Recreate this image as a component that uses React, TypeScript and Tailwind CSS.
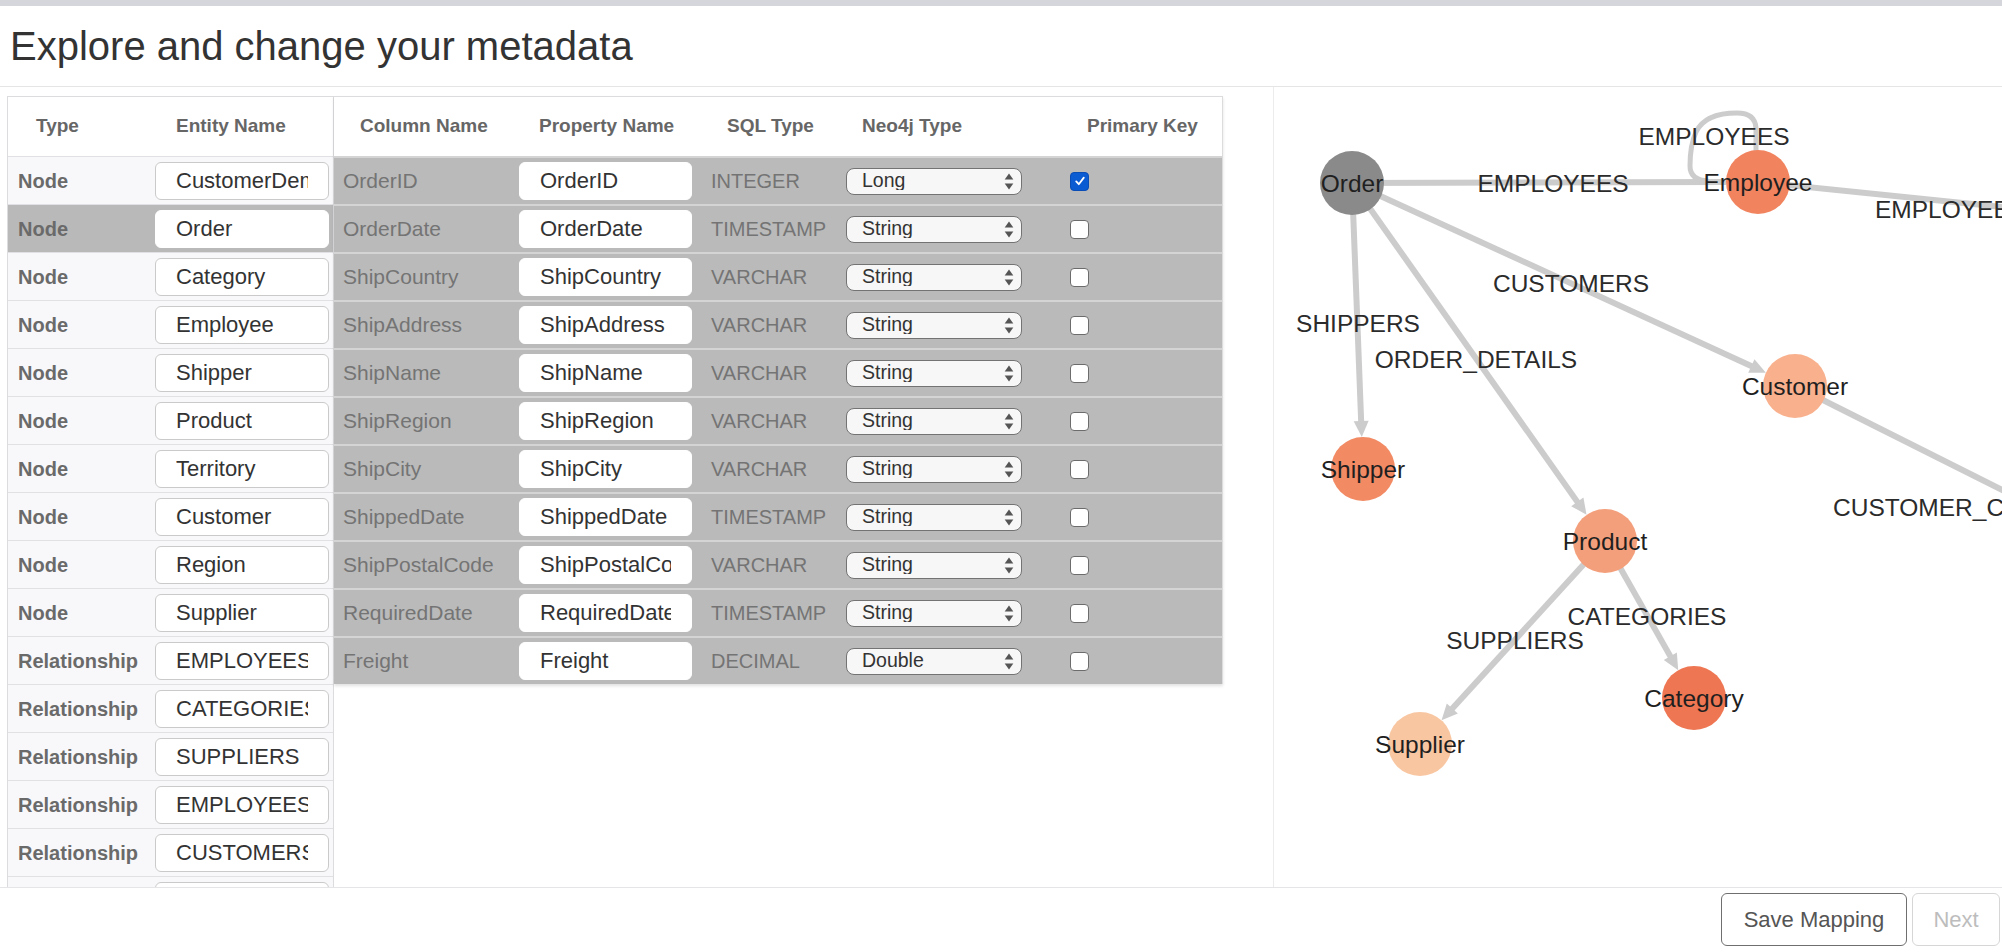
import React from 'react';

// Types
interface EntityRow {
  type: 'Node' | 'Relationship';
  name: string;
  selected?: boolean;
}

interface ColumnRow {
  column: string;
  property: string;
  sqlType: string;
  neoType: string;
  pk?: boolean;
}

interface GraphNode {
  id: string;
  x: number;
  y: number;
  color: string;
}

const entities: EntityRow[] = [
  { type: 'Node', name: 'CustomerDemographics' },
  { type: 'Node', name: 'Order', selected: true },
  { type: 'Node', name: 'Category' },
  { type: 'Node', name: 'Employee' },
  { type: 'Node', name: 'Shipper' },
  { type: 'Node', name: 'Product' },
  { type: 'Node', name: 'Territory' },
  { type: 'Node', name: 'Customer' },
  { type: 'Node', name: 'Region' },
  { type: 'Node', name: 'Supplier' },
  { type: 'Relationship', name: 'EMPLOYEES' },
  { type: 'Relationship', name: 'CATEGORIES' },
  { type: 'Relationship', name: 'SUPPLIERS' },
  { type: 'Relationship', name: 'EMPLOYEES' },
  { type: 'Relationship', name: 'CUSTOMERS' },
  { type: 'Relationship', name: 'SHIPPERS' },
  { type: 'Relationship', name: 'ORDER_DETAILS' },
];

const columns: ColumnRow[] = [
  { column: 'OrderID', property: 'OrderID', sqlType: 'INTEGER', neoType: 'Long', pk: true },
  { column: 'OrderDate', property: 'OrderDate', sqlType: 'TIMESTAMP', neoType: 'String' },
  { column: 'ShipCountry', property: 'ShipCountry', sqlType: 'VARCHAR', neoType: 'String' },
  { column: 'ShipAddress', property: 'ShipAddress', sqlType: 'VARCHAR', neoType: 'String' },
  { column: 'ShipName', property: 'ShipName', sqlType: 'VARCHAR', neoType: 'String' },
  { column: 'ShipRegion', property: 'ShipRegion', sqlType: 'VARCHAR', neoType: 'String' },
  { column: 'ShipCity', property: 'ShipCity', sqlType: 'VARCHAR', neoType: 'String' },
  { column: 'ShippedDate', property: 'ShippedDate', sqlType: 'TIMESTAMP', neoType: 'String' },
  { column: 'ShipPostalCode', property: 'ShipPostalCode', sqlType: 'VARCHAR', neoType: 'String' },
  { column: 'RequiredDate', property: 'RequiredDate', sqlType: 'TIMESTAMP', neoType: 'String' },
  { column: 'Freight', property: 'Freight', sqlType: 'DECIMAL', neoType: 'Double' },
];

// graph coordinates are page coordinates (see viewBox)
const nodes: Record<string, GraphNode> = {
  Order: { id: 'Order', x: 1352, y: 183, color: '#8a8a8a' },
  Employee: { id: 'Employee', x: 1758, y: 182, color: '#f1845f' },
  Customer: { id: 'Customer', x: 1795, y: 386, color: '#f8b08d' },
  Shipper: { id: 'Shipper', x: 1363, y: 469, color: '#f28a64' },
  Product: { id: 'Product', x: 1605, y: 541, color: '#f49f7b' },
  Category: { id: 'Category', x: 1694, y: 698, color: '#ee7652' },
  Supplier: { id: 'Supplier', x: 1420, y: 744, color: '#f9c6a2' },
};

const R = 32;
const EDGE = '#cccccc';

// Edge with optional arrow head ending on target circle
const Edge: React.FC<{ x1: number; y1: number; x2: number; y2: number; head?: boolean; r?: number }> = ({
  x1, y1, x2, y2, head = true, r = R,
}) => {
  const dx = x2 - x1;
  const dy = y2 - y1;
  const len = Math.hypot(dx, dy);
  const ux = dx / len;
  const uy = dy / len;
  const tipX = x2 - ux * r;
  const tipY = y2 - uy * r;
  const bx = tipX - ux * 16;
  const by = tipY - uy * 16;
  const px = -uy * 7.5;
  const py = ux * 7.5;
  return (
    <g>
      <line x1={x1} y1={y1} x2={head ? bx + ux : tipX} y2={head ? by + uy : tipY} stroke={EDGE} strokeWidth={6} />
      {head && (
        <polygon points={`${tipX},${tipY} ${bx + px},${by + py} ${bx - px},${by - py}`} fill={EDGE} />
      )}
    </g>
  );
};

const Graph: React.FC = () => {
  const n = nodes;
  const labels: { text: string; x: number; y: number; anchor?: 'start' | 'middle' }[] = [
    { text: 'EMPLOYEES', x: 1553, y: 183 },
    { text: 'EMPLOYEES', x: 1714, y: 136 },
    { text: 'EMPLOYEES', x: 1875, y: 209, anchor: 'start' },
    { text: 'CUSTOMERS', x: 1571, y: 283 },
    { text: 'SHIPPERS', x: 1358, y: 323 },
    { text: 'ORDER_DETAILS', x: 1476, y: 359 },
    { text: 'CUSTOMER_CUSTOMER_DEMO', x: 1833, y: 507, anchor: 'start' },
    { text: 'CATEGORIES', x: 1647, y: 616 },
    { text: 'SUPPLIERS', x: 1515, y: 640 },
  ];

  return (
    <svg width="728" height="800" viewBox="1274 87 728 800" className="block">
      {/* edges */}
      <Edge x1={n.Order.x} y1={n.Order.y} x2={n.Employee.x} y2={n.Employee.y} head={false} />
      <path
        d="M1756 152 L1756 128 Q1755 113 1737 113 Q1705 113 1696 132 Q1690 145 1690 166 Q1690 180 1708 181"
        fill="none"
        stroke={EDGE}
        strokeWidth={5}
      />
      <Edge x1={n.Employee.x} y1={n.Employee.y} x2={2100} y2={217} head={false} r={0} />
      <Edge x1={n.Order.x} y1={n.Order.y} x2={n.Customer.x} y2={n.Customer.y} />
      <Edge x1={n.Order.x} y1={n.Order.y} x2={n.Shipper.x} y2={n.Shipper.y} />
      <Edge x1={n.Order.x} y1={n.Order.y} x2={n.Product.x} y2={n.Product.y} />
      <Edge x1={n.Customer.x} y1={n.Customer.y} x2={2100} y2={539} head={false} r={0} />
      <Edge x1={n.Product.x} y1={n.Product.y} x2={n.Supplier.x} y2={n.Supplier.y} />
      <Edge x1={n.Product.x} y1={n.Product.y} x2={n.Category.x} y2={n.Category.y} />

      {/* nodes */}
      {Object.values(n).map(node => (
        <circle key={node.id} cx={node.x} cy={node.y} r={R} fill={node.color} />
      ))}

      {/* edge labels */}
      {labels.map((l, i) => (
        <text
          key={i}
          x={l.x}
          y={l.y}
          textAnchor={l.anchor || 'middle'}
          dominantBaseline="central"
          fontFamily="'Liberation Sans', Arial, sans-serif"
          fontSize={24.5}
          fill="#2b2b2b"
        >
          {l.text}
        </text>
      ))}

      {/* node labels */}
      {Object.values(n).map(node => (
        <text
          key={node.id + '-label'}
          x={node.x}
          y={node.y}
          textAnchor="middle"
          dominantBaseline="central"
          fontFamily="'Liberation Sans', Arial, sans-serif"
          fontSize={24.5}
          fill="#1f1f1f"
        >
          {node.id}
        </text>
      ))}
    </svg>
  );
};

const Checkbox: React.FC<{ checked?: boolean }> = ({ checked }) => (
  <div
    className={`w-[19px] h-[19px] rounded-[4px] border flex items-center justify-center ${
      checked ? 'bg-[#0b5bd3] border-[#0a4db5]' : 'bg-white border-[#6c6c6c]'
    }`}
  >
    {checked && (
      <svg width="12" height="12" viewBox="0 0 12 12">
        <path d="M2.2 6.4 L4.8 9.2 L9.8 2.6" fill="none" stroke="white" strokeWidth="1.8" strokeLinecap="round" strokeLinejoin="round" />
      </svg>
    )}
  </div>
);

const TypeSelect: React.FC<{ value: string }> = ({ value }) => (
  <div className="relative w-[176px] h-[27px]">
    <select
      value={value}
      onChange={() => {}}
      className="appearance-none w-full h-full rounded-[8px] border border-[#737373] bg-[#f7f7f7] pl-[15px] pt-0 pb-[1px] text-[19.5px] leading-none text-[#333] outline-none"
    >
      <option>String</option>
      <option>Long</option>
      <option>Double</option>
      <option>Boolean</option>
    </select>
    <svg className="pointer-events-none absolute right-[8px] top-[5px]" width="10" height="17" viewBox="0 0 10 17">
      <path d="M5 0.5 L9.3 6.5 H0.7 Z" fill="#555" />
      <path d="M5 16.5 L9.3 10.5 H0.7 Z" fill="#555" />
    </svg>
  </div>
);

export default function App() {
  return (
    <div className="w-[2002px] h-[952px] overflow-hidden bg-white font-['Liberation_Sans',Arial,sans-serif]">
      {/* top strip */}
      <div className="h-[6px] bg-[#d5d6dc]" />

      {/* Title */}
      <div className="h-[81px] border-b border-[#e5e5e8] flex items-center pl-[10px]">
        <h1 className="text-[40px] text-[#333] font-normal">Explore and change your metadata</h1>
      </div>

      {/* Main */}
      <div className="h-[800px] flex overflow-hidden">
        {/* Tables */}
        <div className="w-[1274px] shrink-0 border-r border-[#ececef] pl-[7px] pt-[9px] overflow-hidden">
          <div className="flex items-start">
            {/* Entities */}
            <div className="w-[327px] shrink-0 border-l border-t border-r border-[#dcdcdf]">
              <div className="grid grid-cols-[138px_1fr] h-[59px] items-center bg-white text-[19px] font-bold text-[#666]">
                <div className="pl-[28px]">Type</div>
                <div className="pl-[30px]">Entity Name</div>
              </div>
              {entities.map((e, i) => (
                <div
                  key={i}
                  className={`grid grid-cols-[138px_1fr] h-[48px] items-center border-t border-[#e1e1e5] ${
                    e.selected ? 'bg-[#b9b9b9]' : 'bg-[#f8f8fa]'
                  }`}
                >
                  <div className="pl-[10px] text-[20px] font-bold text-[#6a6a6a]">{e.type}</div>
                  <div className="pl-[9px]">
                    <input
                      readOnly
                      value={e.name}
                      className={`w-[174px] h-[38px] rounded-[6px] bg-white px-[20px] text-[22px] text-[#333] outline-none border ${
                        e.selected ? 'border-white' : 'border-[#cacaca]'
                      }`}
                    />
                  </div>
                </div>
              ))}
            </div>

            {/* Columns of selected entity */}
            <div className="w-[889px] shrink-0 border-t border-r border-[#dcdcdf] shadow-[0_2px_3px_rgba(0,0,0,0.12)]">
              <div className="grid grid-cols-[176px_192px_135px_224px_1fr] h-[59px] items-center bg-white text-[19px] font-bold text-[#666]">
                <div className="pl-[26px]">Column Name</div>
                <div className="pl-[29px]">Property Name</div>
                <div className="pl-[25px]">SQL Type</div>
                <div className="pl-[25px]">Neo4j Type</div>
                <div className="pl-[26px]">Primary Key</div>
              </div>
              {columns.map(c => (
                <div
                  key={c.column}
                  className="grid grid-cols-[176px_192px_135px_224px_1fr] h-[48px] items-center border-t-2 border-[#d4d4d4] bg-[#bababa]"
                >
                  <div className="pl-[9px] text-[21px] text-[#747474]">{c.column}</div>
                  <div className="pl-[9px]">
                    <input
                      readOnly
                      value={c.property}
                      className="w-[173px] h-[38px] rounded-[6px] bg-white border border-white px-[20px] text-[22px] text-[#333] outline-none"
                    />
                  </div>
                  <div className="pl-[9px] text-[20px] text-[#747474]">{c.sqlType}</div>
                  <div className="pl-[9px]">
                    <TypeSelect value={c.neoType} />
                  </div>
                  <div className="pl-[9px]">
                    <Checkbox checked={c.pk} />
                  </div>
                </div>
              ))}
            </div>
          </div>
        </div>

        {/* Graph */}
        <div className="flex-1 overflow-hidden">
          <Graph />
        </div>
      </div>

      {/* Footer */}
      <div className="h-[65px] border-t border-[#e5e5e8] flex justify-end items-start pt-[5px] pr-[2px] gap-[5px]">
        <button className="w-[186px] h-[53px] rounded-[6px] border border-[#6f6f6f] bg-white text-[22px] text-[#555]">
          Save Mapping
        </button>
        <button disabled className="w-[88px] h-[53px] rounded-[6px] border border-[#d6d6d6] bg-white text-[22px] text-[#bdbdbd]">
          Next
        </button>
      </div>
    </div>
  );
}
